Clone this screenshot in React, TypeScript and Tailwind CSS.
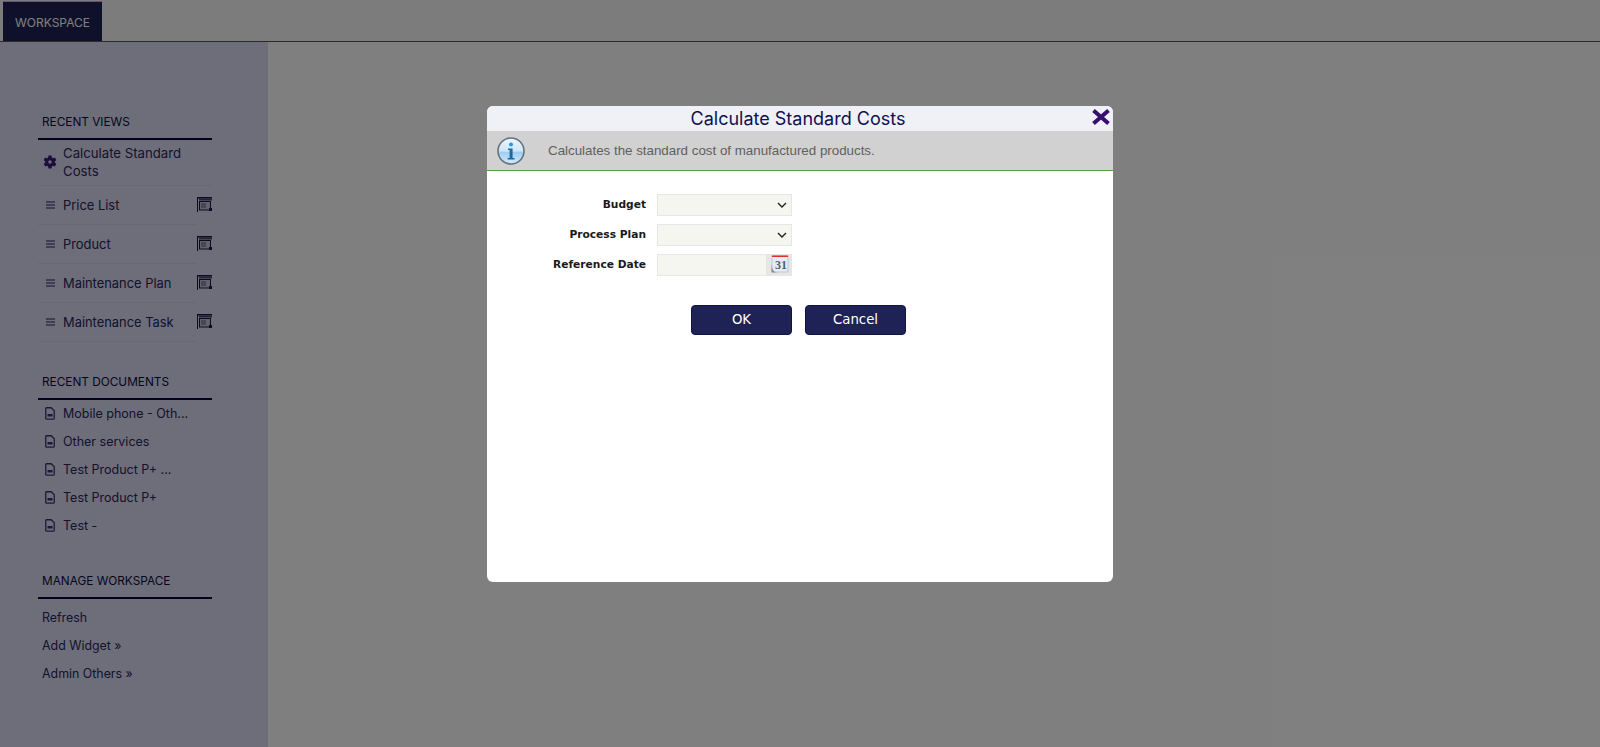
const poppins = "font-['Inter','Noto_Sans',sans-serif]";

const recentViews = ["Price List", "Product", "Maintenance Plan", "Maintenance Task"];
const recentDocs = ["Mobile phone - Oth...", "Other services", "Test Product P+ ...", "Test Product P+", "Test -"];
const manageLinks = ["Refresh", "Add Widget »", "Admin Others »"];

function GearIcon() {
  return (
    <svg width="14" height="14" viewBox="0 0 24 24" className="shrink-0">
      <path
        fill="#3b1a78"
        fillRule="evenodd"
        d="M9.5 1h5l.7 3.3 1.9 1.1 3.2-1 2.5 4.3-2.5 2.3v2l2.5 2.3-2.5 4.3-3.2-1-1.9 1.1-.7 3.3h-5l-.7-3.3-1.9-1.1-3.2 1L1.2 15.3l2.5-2.3v-2L1.2 8.7l2.5-4.3 3.2 1 1.9-1.1L9.500 1zM12 9a3 3 0 1 0 0 6 3 3 0 0 0 0-6z"
      />
    </svg>
  );
}

function ListIcon() {
  return (
    <svg width="9" height="8" viewBox="0 0 9 8" className="shrink-0">
      <path d="M0 0.5h9v1H0zM0 3.5h9v1H0zM0 6.5h9v1H0z" fill="#2a1a5e" />
    </svg>
  );
}

function WindowIcon() {
  return (
    <svg width="15" height="15" viewBox="0 0 15 15" className="mt-[2px] shrink-0">
      <rect x="0" y="0" width="1" height="15" fill="#1c1440" />
      <rect x="1" y="0" width="14" height="1.500" fill="#1c1440" />
      <rect x="2" y="1.500" width="13" height="2" fill="#47406e" />
      <rect x="2.500" y="4.500" width="11" height="8.500" fill="#c4c4dc" stroke="#1c1440" strokeWidth="1" />
      <rect x="4" y="6" width="5" height="5" fill="#8f8fa8" />
      <rect x="12" y="11" width="3" height="3" fill="#1c1440" />
    </svg>
  );
}

function DocIcon() {
  return (
    <svg width="10" height="13" viewBox="0 0 10 13" className="mb-[2px] shrink-0">
      <path d="M1.500.75h4.700L9.250 3.800v7.400a1 1 0 0 1-1 1h-6.500a1 1 0 0 1-1-1V1.500a.75.75 0 0 1 .75-.75z" fill="none" stroke="#3d2f73" strokeWidth="1.300" />
      <rect x="2.500" y="7" width="5" height="2.500" fill="#3d2f73" />
    </svg>
  );
}

function InfoIcon() {
  return (
    <svg width="28" height="28" viewBox="0 0 28 28">
      <defs>
        <linearGradient id="infoFill" x1="0" y1="0" x2="0" y2="1">
          <stop offset="0" stopColor="#eef6fd" />
          <stop offset="0.5" stopColor="#cfe5f8" />
          <stop offset="0.55" stopColor="#9fcdf2" />
          <stop offset="1" stopColor="#d4ebfb" />
        </linearGradient>
      </defs>
      <circle cx="14" cy="14" r="13" fill="url(#infoFill)" stroke="#66737e" strokeWidth="1.600" />
      <circle cx="14" cy="7.500" r="2" fill="#1c9ee6" />
      <path d="M11 11.500h4.600v9.500h2v1.600h-7V21h2v-7.900H11z" fill="#1b6a9c" />
    </svg>
  );
}

function CalendarIcon() {
  return (
    <svg width="18" height="19" viewBox="0 0 18 19" className="mb-[2px]">
      <rect x="1" y="1" width="16" height="16" fill="#e4ebf5" stroke="#a8b3c2" strokeWidth="0.600" />
      <rect x="1" y="0.500" width="16" height="1.500" fill="#d9352a" />
      <text x="10" y="14" textAnchor="middle" fontSize="12" fontWeight="700" fontFamily="'Liberation Serif', serif" fill="#53606e">
        31
      </text>
      <path d="M0.500 9c.5 4 1 6 3 7.500 1 .6 2.500 1 4.500 1H0.500z" fill="#8d8d8d" />
    </svg>
  );
}

function Chevron() {
  return (
    <svg width="10" height="6" viewBox="0 0 10 6" className="shrink-0">
      <path d="M1 1l4 4 4-4" fill="none" stroke="#222222" strokeWidth="1.400" />
    </svg>
  );
}

function SectionHeading({ children }: { children: string }) {
  return (
    <div className="border-b-2 border-[#05053c] pb-[7px] pl-1 text-[11.8px] leading-[18px] text-[#0b0b40]">
      {children}
    </div>
  );
}

function Sidebar() {
  return (
    <aside className={`w-[268px] shrink-0 bg-[#dcdcf4] pl-[38px] pt-[71px] ${poppins}`}>
      <div className="w-[174px] text-[#26265a]">
        <SectionHeading>RECENT VIEWS</SectionHeading>
        <div className="flex h-[46px] items-center gap-[6px] border-b border-[#d0d0e6] pb-[2px] pl-[5px] text-[13.2px] leading-[18px]">
          <GearIcon />
          <span>
            Calculate Standard
            <br />
            Costs
          </span>
        </div>
        {recentViews.map((name) => (
          <div key={name} className="flex h-[39px] items-start pt-[9px] text-[12.9px]">
            <div className="flex h-[30px] flex-1 items-start gap-2 border-b border-[#d0d0e6] pl-2 leading-[21px]">
              <span className="mt-[6px]">
                <ListIcon />
              </span>
              <span>{name}</span>
            </div>
            <WindowIcon />
          </div>
        ))}

        <div className="mt-[31px]">
          <SectionHeading>RECENT DOCUMENTS</SectionHeading>
        </div>
        <div className="text-[12.5px]">
          {recentDocs.map((name) => (
            <div key={name} className="flex h-[28px] items-center gap-2 pl-[7px]">
              <DocIcon />
              <span>{name}</span>
            </div>
          ))}
        </div>

        <div className="mt-[32px]">
          <SectionHeading>MANAGE WORKSPACE</SectionHeading>
        </div>
        <div className="pt-[5px] text-[12.4px]">
          {manageLinks.map((name) => (
            <div key={name} className="flex h-[28px] items-center pl-1">
              {name}
            </div>
          ))}
        </div>
      </div>
    </aside>
  );
}

function FormRow({ label, children }: { label: string; children: React.ReactNode }) {
  return (
    <div className="flex items-center">
      <label className="w-[162px] pr-[11px] text-right font-['DejaVu_Sans',sans-serif] text-[10.67px] font-bold text-[#1a1a1a]">
        {label}
      </label>
      {children}
    </div>
  );
}

function SelectBox() {
  return (
    <div className="flex h-[22px] w-[135px] items-center justify-end border border-[#e6e6e6] bg-[#f4f6ef] pr-[4px]">
      <Chevron />
    </div>
  );
}

function Dialog() {
  return (
    <div className="absolute inset-0 flex items-start justify-center bg-black/50 pt-[106px]">
      <div className="flex h-[476px] w-[626px] flex-col overflow-hidden rounded-[6px] bg-white">
        <div className={`relative h-[25px] bg-[#eff1f7] pr-1 text-center text-[18px] leading-[25px] text-[#101050] ${poppins}`}>
          Calculate Standard Costs
          <svg width="20" height="16" viewBox="0 0 20 16" className="absolute right-[2px] top-[3px]">
            <path d="M2.500 1.500L17.500 14.500M17.500 1.500L2.500 14.500" stroke="#380e6e" strokeWidth="4" />
          </svg>
        </div>
        <div className="flex h-[40px] items-center gap-[23px] border-b border-[#5da24a] bg-[#d1d1d1] pl-[10px] font-['Liberation_Sans',sans-serif] text-[13.33px] text-[#606060]">
          <InfoIcon />
          <span>Calculates the standard cost of manufactured products.</span>
        </div>
        <div className="flex flex-col gap-[8px] pl-[8px] pt-[23px]">
          <FormRow label="Budget">
            <SelectBox />
          </FormRow>
          <FormRow label="Process Plan">
            <SelectBox />
          </FormRow>
          <FormRow label="Reference Date">
            <div className="flex h-[22px] w-[135px] items-center bg-[#e6e6e6]">
              <div className="h-full flex-1 border border-[#e6e6e6] bg-[#f4f6ef]" />
              <div className="flex w-[25px] items-center justify-center">
                <CalendarIcon />
              </div>
            </div>
          </FormRow>
        </div>
        <div className="mt-[29px] flex justify-center gap-[13px] pr-[3px] font-['DejaVu_Sans',sans-serif] text-[13.33px] text-white">
          <button type="button" className="h-[30px] w-[101px] rounded-[4px] border border-[#0f1440] bg-[#1e2255]">
            OK
          </button>
          <button type="button" className="h-[30px] w-[101px] rounded-[4px] border border-[#0f1440] bg-[#1e2255]">
            Cancel
          </button>
        </div>
      </div>
    </div>
  );
}

export default function App() {
  return (
    <div className="relative flex h-[747px] w-[1600px] flex-col overflow-hidden bg-white">
      <div className="flex h-[42px] shrink-0 items-stretch border-b border-[#555555] bg-[#f9f9f9] pl-[3px] pt-[1px]">
        <div className={`flex w-[99px] items-center justify-center border-t border-[#f0c020] bg-[#1e2255] pt-[2px] text-[12px] text-white ${poppins}`}>
          WORKSPACE
        </div>
      </div>
      <div className="flex flex-1">
        <Sidebar />
        <main className="flex-1" />
      </div>
      <Dialog />
    </div>
  );
}
